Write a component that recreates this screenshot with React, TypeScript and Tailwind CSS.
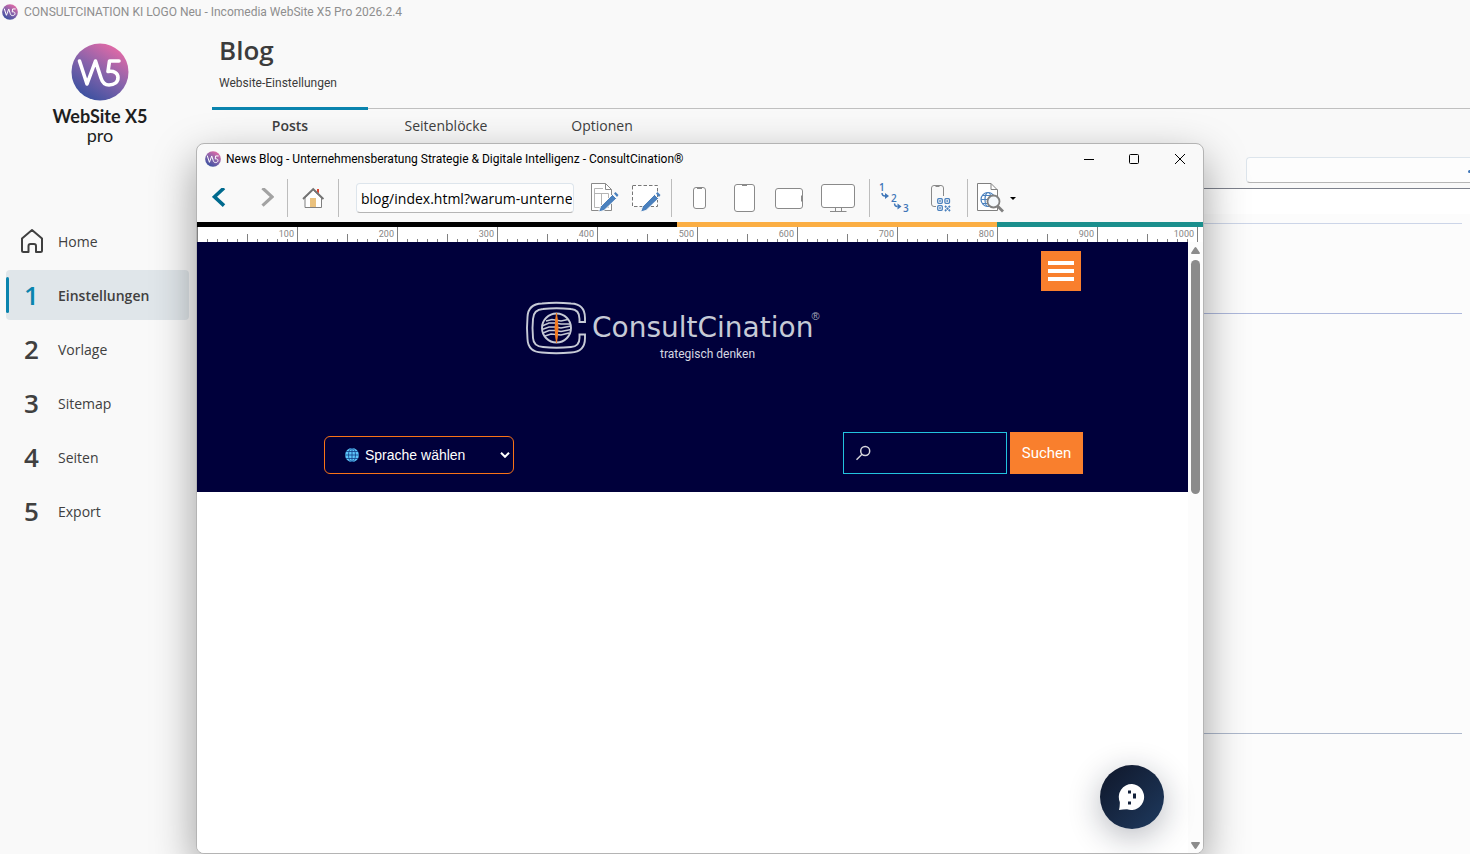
import React, { useId } from 'react';

const UI = "font-['Open_Sans','Noto_Sans',sans-serif]";

function BrandMark({ className }: { className: string }) {
  const id = useId();
  return (
    <svg viewBox="0 0 58 58" className={className} aria-hidden="true">
      <defs>
        <linearGradient id={id} x1="0.8" y1="0.05" x2="0.25" y2="0.95">
          <stop offset="0" stopColor="#e56aa6" />
          <stop offset="0.5" stopColor="#8763ab" />
          <stop offset="1" stopColor="#3c51a0" />
        </linearGradient>
      </defs>
      <circle cx="29" cy="29" r="28.5" fill={`url(#${id})`} />
      <path
        d="M8.500 18 L16 41 L24.500 18 L30 35 C31.500 40 34 42 38 42 C43.500 42 47 39 47 34.500 C47 30 43 27.500 37 28.500 L38.500 18 H48"
        fill="none"
        stroke="#fff"
        strokeWidth="3.600"
        strokeLinecap="round"
        strokeLinejoin="round"
      />
    </svg>
  );
}

const NAV = [
  { mark: '1', label: 'Einstellungen', active: true },
  { mark: '2', label: 'Vorlage' },
  { mark: '3', label: 'Sitemap' },
  { mark: '4', label: 'Seiten' },
  { mark: '5', label: 'Export' },
];

function Sidebar() {
  return (
    <aside className="w-[212px] shrink-0">
      <div className="flex w-[200px] flex-col items-center pt-[19px] font-['Lato',sans-serif] text-[#1f1f1f]">
        <BrandMark className="h-[58px] w-[58px]" />
        <div className="mt-[6px] text-[18px] leading-[18px] font-bold">WebSite X5</div>
        <div className="text-[18px] leading-5">pro</div>
      </div>
      <nav className="mt-[71px] flex flex-col gap-1 pr-[23px] pl-[6px] text-[14px] text-[#404040]">
        <a href="#home" className="flex h-[50px] items-center">
          <span className="flex w-[52px] justify-center">
            <svg viewBox="0 0 24 26" className="h-[26px] w-6" fill="none" stroke="#404040" strokeWidth="2" strokeLinejoin="round" aria-hidden="true">
              <path d="M2 10.500 L12 2 L22 10.500 V22.500 Q22 24 20.500 24 H16 V18 Q16 16 14 16 H10.500 Q8.500 16 8.500 18 V24 H3.500 Q2 24 2 22.500 Z" />
            </svg>
          </span>
          Home
        </a>
        {NAV.map((n) => (
          <a
            key={n.mark}
            href={`#${n.label.toLowerCase()}`}
            className={n.active ? 'flex h-[50px] items-center rounded bg-[#e0e6ea] font-semibold' : 'flex h-[50px] items-center'}
          >
            <span className={n.active ? 'h-9 w-[3px] rounded bg-[#0a84ae]' : 'w-[3px]'} />
            <span className={n.active ? 'w-[49px] pr-1 text-center text-[26px] font-semibold text-[#0a84ae]' : 'w-[49px] pr-1 text-center text-[26px] font-semibold'}>
              {n.mark}
            </span>
            {n.label}
          </a>
        ))}
      </nav>
    </aside>
  );
}

function Background() {
  return (
    <div className="flex min-h-screen flex-col">
      <header className="flex h-6 items-center gap-[6px] pl-[2px] font-['Roboto',sans-serif] text-[12px] text-[#8e8e8e]">
        <BrandMark className="h-4 w-4" />
        <span className="whitespace-nowrap">CONSULTCINATION KI LOGO Neu - Incomedia WebSite X5 Pro 2026.2.4</span>
      </header>
      <div className="flex grow">
        <Sidebar />
        <main className="flex min-w-0 grow flex-col">
          <div className="h-[84px] pl-[7px] text-[#3c3c3c]">
            <h1 className="pt-[9px] text-[26px] leading-[34px] font-semibold">Blog</h1>
            <p className="pt-2 font-['Roboto',sans-serif] text-[12px] leading-4">Website-Einstellungen</p>
          </div>
          <div className="flex h-9 border-t border-[#c0c0c0] text-[14px] text-[#404040]" role="tablist">
            <button role="tab" aria-selected="true" className="-mt-[2px] w-[156px] border-t-[3px] border-[#0a84ae] pb-[3px] font-semibold">Posts</button>
            <button role="tab" aria-selected="false" className="w-[156px] pb-[2px]">Seitenblöcke</button>
            <button role="tab" aria-selected="false" className="w-[156px] pb-[2px]">Optionen</button>
          </div>
          <div className="flex h-[45px] items-center justify-end border-b border-[#7d818c] pt-[7px]">
            <input aria-label="Suche" className="h-[26px] w-[224px] rounded-l border border-r-0 border-[#dde5ec] border-b-[#b5b5b5] bg-[#fdfdfd] px-2" />
          </div>
          <div className="h-[25px] bg-white" />
          <div className="grow bg-[#fcfcfc] pt-[9px] pr-2">
            <div className="h-[90px] border-t border-[#ccd5e8]" />
            <div className="h-[420px] border-t border-[#adb8dc]" />
            <div className="border-t border-[#adb8cc]" />
          </div>
        </main>
        <span className="absolute top-[170px] right-0 h-[3px] w-[2px] rounded-l-full bg-[#3f76b8]" />
      </div>
    </div>
  );
}

function Separator() {
  return <span className="h-[38px] w-px shrink-0 bg-[#bdbdbd]" />;
}

function ToolButton({ label, className, children }: { label: string; className: string; children: React.ReactNode }) {
  return (
    <button aria-label={label} className={`flex h-10 shrink-0 items-center justify-center ${className}`}>
      {children}
    </button>
  );
}

function Pencil() {
  return (
    <g>
      <path d="M9.500 30 L11.500 24.500 L23.500 12.500 L27.500 16.500 L15 28.500 Z" fill="#4a80bd" stroke="#f9f9f9" strokeWidth="1" />
      <path d="M25 11.500 L26.500 10 L29.500 13 L28 15 Z" fill="#4a80bd" stroke="none" />
    </g>
  );
}

function Toolbar() {
  return (
    <div className="flex h-12 items-center">
      <ToolButton label="Zurück" className="w-11">
        <svg viewBox="0 0 14 20" className="h-5 w-[14px]" fill="none" stroke="#006a8e" strokeWidth="3.600"><path d="M12 0 L2.500 8.800 L12 17.600" /></svg>
      </ToolButton>
      <ToolButton label="Vorwärts" className="ml-[6px] w-10">
        <svg viewBox="0 0 14 20" className="h-5 w-[14px]" fill="none" stroke="#a3a3a3" strokeWidth="3.200"><path d="M2.500 0 L12 8.800 L2.500 17.600" /></svg>
      </ToolButton>
      <Separator />
      <ToolButton label="Startseite" className="w-[50px]">
        <svg viewBox="0 0 22 22" className="h-[22px] w-[22px]" fill="none">
          <path d="M15 2 h2 v4.500 l-2 -2 z" fill="#e0452f" />
          <path d="M3 11 V20.500 H19.500 V11 L11.200 3 Z" fill="#fff" stroke="#808080" />
          <rect x="8" y="11" width="6" height="9" fill="#eac17d" />
          <path d="M1 12 L11.200 2 L21.400 12" stroke="#747474" strokeWidth="1.800" />
        </svg>
      </ToolButton>
      <Separator />
      <input
        aria-label="Adresse"
        defaultValue="blog/index.html?warum-unternehmen"
        className="ml-[17px] h-[30px] w-[218px] shrink-0 rounded border border-[#dde5ec] border-b-[#b5b5b5] bg-[#fdfdfd] pr-px pl-1 text-[14px] text-black outline-none"
      />
      <ToolButton label="Seite bearbeiten" className="ml-[9px] w-[42px]">
        <svg viewBox="0 0 30 32" className="h-8 w-[30px]" fill="none" stroke="#8a8a8a">
          <path d="M2.500 1.500 H16.500 L22.500 7.500 V28.500 H2.500 Z" fill="#fff" />
          <path d="M16.500 1.500 V7.500 H22.500" />
          <path d="M5.500 6.500 H14 M5.500 6.500 V25.500 H19.500 V11.500 M5.500 11.500 H19.500 M12.500 11.500 V25.500" stroke="#b4b4b4" />
          <Pencil />
        </svg>
      </ToolButton>
      <ToolButton label="Bereich bearbeiten" className="mr-1 w-[42px]">
        <svg viewBox="0 0 30 32" className="h-8 w-[30px]" fill="none">
          <rect x="1.500" y="3.500" width="25" height="21" fill="#fff" stroke="#777" strokeDasharray="3.500 2" />
          <Pencil />
        </svg>
      </ToolButton>
      <Separator />
      <ToolButton label="Smartphone" className="ml-[6px] w-11">
        <svg viewBox="0 0 14 22" className="h-[22px] w-[14px]" fill="#fff" stroke="#8a8a8a">
          <rect x="0.500" y="0.500" width="12" height="21" rx="2.500" /><path d="M4 1.500 H9" />
        </svg>
      </ToolButton>
      <ToolButton label="Tablet hochkant" className="ml-px w-11">
        <svg viewBox="0 0 22 28" className="h-7 w-[22px]" fill="#fff" stroke="#8a8a8a">
          <rect x="0.500" y="0.500" width="20" height="27" rx="2.500" /><path d="M8 1.500 H13" />
        </svg>
      </ToolButton>
      <ToolButton label="Tablet quer" className="w-11">
        <svg viewBox="0 0 28 22" className="h-[22px] w-7" fill="#fff" stroke="#8a8a8a">
          <rect x="0.500" y="1.500" width="27" height="20" rx="2.500" /><path d="M26.500 8.500 V14.500" />
        </svg>
      </ToolButton>
      <ToolButton label="Desktop" className="mr-1 w-[54px]">
        <svg viewBox="0 0 34 28" className="h-7 w-[34px]" fill="#fff" stroke="#8a8a8a">
          <rect x="0.500" y="0.500" width="33" height="23" rx="2.500" /><path d="M14.500 23.500 V27.500 M20.500 23.500 V27.500 M9 27.500 H25.500" />
        </svg>
      </ToolButton>
      <Separator />
      <ToolButton label="Reihenfolge" className="w-[50px]">
        <svg viewBox="0 0 34 38" className="h-[38px] w-[34px] font-['Open_Sans',sans-serif] text-[10px] font-semibold" fill="#3f76b8">
          <text x="1" y="12">1</text>
          <text x="13" y="23">2</text>
          <text x="25" y="33">3</text>
          <path d="M4 14 Q4 17 7 17" fill="none" stroke="#3f76b8" strokeWidth="1.400" /><path d="M7 14 L11 17 L7 20 Z" />
          <path d="M16.500 24.500 Q16.500 27.500 19.500 27.500" fill="none" stroke="#3f76b8" strokeWidth="1.400" /><path d="M19.500 24.500 L23.500 27.500 L19.500 30.500 Z" />
        </svg>
      </ToolButton>
      <ToolButton label="QR-Code" className="mr-[5px] w-[42px]">
        <svg viewBox="0 0 20 28" className="h-7 w-5" fill="none" stroke="#8a8a8a">
          <path d="M5 22.500 H3 Q0.500 22.500 0.500 20 V4 Q0.500 1.500 3 1.500 H10 Q12.500 1.500 12.500 4 V12" />
          <path d="M4.500 2.500 H8.500" />
          <g stroke="#4a80bd" strokeWidth="1.300">
            <rect x="6.700" y="14.700" width="4.600" height="4.600" rx="1" /><rect x="13.900" y="14.700" width="4.600" height="4.600" rx="1" />
            <rect x="6.700" y="21.700" width="4.600" height="4.600" rx="1" />
            <path d="M14 22 L19 27 M19 22 L14 27" strokeWidth="1.800" strokeDasharray="2 0.600" />
          </g>
          <g fill="#4a80bd" stroke="none"><rect x="8.200" y="16.200" width="1.600" height="1.600" /><rect x="15.400" y="16.200" width="1.600" height="1.600" /><rect x="8.200" y="23.200" width="1.600" height="1.600" /></g>
        </svg>
      </ToolButton>
      <Separator />
      <ToolButton label="Vorschau" className="gap-[5px] pl-[9px]">
        <svg viewBox="0 0 28 32" className="h-8 w-7" fill="none" stroke="#808080">
          <path d="M0.500 1.500 H14 L20.500 8 V28.500 H0.500 Z" fill="#fff" />
          <path d="M14 1.500 V7.500 H20.500" />
          <g stroke="#4a80bd" strokeWidth="1.200"><circle cx="11" cy="17.500" r="7" /><ellipse cx="11" cy="17.500" rx="3" ry="7" /><path d="M4 17.500 H12 M5 13.500 H15 M5 21.500 H12" /></g>
          <circle cx="16.500" cy="19.500" r="6" fill="#f4f8fc" strokeWidth="1.800" />
          <path d="M20.500 24 L26 29.500" strokeWidth="2.800" />
        </svg>
        <svg viewBox="0 0 6 3" className="h-[3px] w-[6px]"><path d="M0 0 H6 L3 3 Z" /></svg>
      </ToolButton>
    </div>
  );
}

const RULER = [100, 200, 300, 400, 500, 600, 700, 800, 900, 1000];

function Ruler() {
  return (
    <div className="flex h-[15px] shrink-0 overflow-hidden bg-white">
      {RULER.map((n) => (
        <div key={n} className="grid h-[15px] w-[100px] shrink-0">
          <div className="col-start-1 row-start-1 grid grid-cols-10 items-end">
            <span className="h-[15px] border-l border-[#808080]" />
            {[1, 2, 3, 4, 5, 6, 7, 8, 9].map((t) => (
              <span key={t} className={t === 5 ? 'h-2 border-l border-[#808080]' : 'h-[3px] border-l border-[#808080]'} />
            ))}
          </div>
          <span className="col-start-1 row-start-1 pr-[3px] text-right font-['Roboto',sans-serif] text-[9px] leading-[15px] text-[#858585]">{n}</span>
        </div>
      ))}
      <span className="h-[15px] shrink-0 border-l border-[#808080]" />
    </div>
  );
}

function CompanyLogo() {
  return (
    <div className="flex items-center gap-[5px]">
      <svg viewBox="0 0 62 54" className="h-[54px] w-[62px]" fill="none" stroke="#c6cad6" strokeWidth="1.900">
        <path d="M54.500 33.500 H60 V37 Q60 51 46 51.500 Q31 53 17 51.500 Q3 51 2.500 38 Q1.500 27 2.500 16 Q3 3 17 2.500 Q31 1 46 2.500 Q60 3 60 17 V21 H54.500 V18 Q54.500 8.500 46 8 Q31 6.500 18 8 Q8.500 8.500 8 18 Q7 27 8 37 Q8.500 45.500 18 46 Q31 47.500 46 46 Q54.500 45.500 54.500 37 Z" />
        <circle cx="31.500" cy="27" r="14.500" />
        <path d="M17 25 L24 22 H30 L36 23 H46 M17 28.500 L24 26 H30 L36 27 L46 25 M18 32 L24 29.500 H30 L36 30.500 L46 28.500 M20 35 L26 33 L36 34 L44 32 M21 20 L27 18.500 L36 20 L43 18.500" strokeWidth="1.400" />
        <path d="M31.500 12 Q34.500 27 31.500 42 Q28.500 27 31.500 12 Z" fill="#f47a20" stroke="#f47a20" strokeWidth="1" />
      </svg>
      <span className="flex items-start">
        <span className="font-['DejaVu_Sans',sans-serif] text-[28px] leading-9 font-normal text-[#c6cad6]">ConsultCination</span>
        <span className="-ml-[2px] font-['Liberation_Sans',sans-serif] text-[11px] leading-3 text-[#a9adbd]">®</span>
      </span>
    </div>
  );
}

function Site() {
  return (
    <div className="flex min-w-0 grow flex-col bg-white">
      <section className="flex h-[250px] flex-col bg-[#00003b] pt-[9px] pr-[105px] pl-[127px]">
        <div className="flex justify-end pr-[2px]">
          <button aria-label="Menü" className="flex h-10 w-10 flex-col items-center justify-center gap-1 bg-[#f97f2d]">
            <span className="h-1 w-[26px] bg-white" />
            <span className="h-1 w-[26px] bg-white" />
            <span className="h-1 w-[26px] bg-white" />
          </button>
        </div>
        <div className="mt-[10px] ml-[201px] flex flex-col">
          <CompanyLogo />
          <p className="-mt-[9px] ml-[135px] font-['Roboto',sans-serif] text-[12px] leading-4 text-[#d5d8e2]">trategisch denken</p>
        </div>
        <div className="mt-auto mb-[18px] flex items-end justify-between">
          <label className="grid items-center">
            <svg viewBox="0 0 14 14" className="z-10 col-start-1 row-start-1 ml-[21px] h-[14px] w-[14px]" fill="#5cc4fa" stroke="#123f86" strokeWidth="0.800" aria-hidden="true">
              <circle cx="7" cy="7" r="6.900" stroke="none" />
              <path d="M7 0 V14 M0 7 H14 M1 3.500 H13 M1 10.500 H13" />
              <ellipse cx="7" cy="7" rx="3.500" ry="6.800" fill="none" />
            </svg>
            <select aria-label="Sprache wählen" className="col-start-1 row-start-1 h-[38px] w-[190px] appearance-none rounded-md border border-[#f97316] bg-[#00003b] pl-10 font-['Liberation_Sans',sans-serif] text-[14px] text-white">
              <option>Sprache wählen</option>
            </select>
            <svg viewBox="0 0 10 6" className="z-10 col-start-1 row-start-1 mr-1 h-[6px] w-[10px] justify-self-end" fill="none" stroke="#fff" strokeWidth="2" aria-hidden="true"><path d="M1 0.800 L5 4.800 L9 0.800" /></svg>
          </label>
          <form className="flex gap-[3px]" onSubmit={(e) => e.preventDefault()}>
            <label className="grid items-center">
              <svg viewBox="0 0 16 16" className="z-10 col-start-1 row-start-1 ml-3 h-4 w-4" fill="none" stroke="#d6d6dc" strokeWidth="1.500" aria-hidden="true">
                <circle cx="10.200" cy="6" r="4.500" /><path d="M7 9.200 L1.500 14.700" />
              </svg>
              <input aria-label="Suchbegriff" className="col-start-1 row-start-1 h-[42px] w-[164px] border border-[#22c3dd] bg-transparent pr-2 pl-9 text-white outline-none" />
            </label>
            <button className="h-[42px] w-[73px] bg-[#f97f2d] font-['Roboto',sans-serif] text-[15px] text-white">Suchen</button>
          </form>
        </div>
      </section>
    </div>
  );
}

function PreviewWindow() {
  return (
    <section className="absolute top-[143px] right-[266px] bottom-0 left-[196px] flex flex-col overflow-hidden rounded-lg border border-[#b4b4b4] bg-[#f9f9f9] shadow-[0_16px_44px_rgba(0,0,0,0.38)]">
      <header className="flex h-[30px] shrink-0 items-center pl-2 text-[12px] text-black">
        <BrandMark className="h-4 w-4" />
        <h2 className="ml-[5px] grow font-['Roboto',sans-serif] whitespace-nowrap">News Blog - Unternehmensberatung Strategie &amp; Digitale Intelligenz - ConsultCination®</h2>
        <button aria-label="Minimieren" className="flex w-11 justify-center">
          <svg viewBox="0 0 10 10" className="h-[10px] w-[10px]" stroke="#000"><path d="M0 5.500 H10" /></svg>
        </button>
        <button aria-label="Maximieren" className="flex w-[46px] justify-center">
          <svg viewBox="0 0 10 10" className="h-[10px] w-[10px]" stroke="#000" fill="none"><rect x="0.500" y="0.500" width="9" height="9" rx="1" /></svg>
        </button>
        <button aria-label="Schließen" className="flex w-[46px] justify-center">
          <svg viewBox="0 0 10 10" className="h-[10px] w-[10px]" stroke="#000"><path d="M0 0 L10 10 M10 0 L0 10" /></svg>
        </button>
      </header>
      <Toolbar />
      <div className="flex h-[5px] shrink-0">
        <span className="w-[480px] bg-black" />
        <span className="w-[320px] bg-[#fbae44]" />
        <span className="grow bg-[#1b8f8d]" />
      </div>
      <Ruler />
      <div className="relative flex min-h-0 grow">
        <Site />
        <div className="flex w-[15px] shrink-0 flex-col items-center bg-[#fcfcfc] pt-[5px] pb-1">
          <svg viewBox="0 0 9 7" className="h-[7px] w-[9px]" fill="#8b8b8b"><path d="M4.500 0 Q5 0 5.500 0.800 L9 6 Q9 7 8 7 H1 Q0 7 0 6 L3.500 0.800 Q4 0 4.500 0 Z" /></svg>
          <span className="mt-[6px] h-[234px] w-[9px] rounded-full bg-[#8b8b8b]" />
          <svg viewBox="0 0 9 7" className="mt-auto h-[7px] w-[9px]" fill="#8b8b8b"><path d="M4.500 7 Q5 7 5.500 6.200 L9 1 Q9 0 8 0 H1 Q0 0 0 1 L3.500 6.200 Q4 7 4.500 7 Z" /></svg>
        </div>
        <button aria-label="Chat öffnen" className="absolute right-[39px] bottom-6 flex h-16 w-16 items-center justify-center rounded-full bg-linear-to-br from-[#0f172a] to-[#1e3a5f] shadow-[0_8px_32px_rgba(15,23,42,0.3)]">
          <svg viewBox="0 0 28 28" className="h-7 w-7" fill="#fff">
            <path d="M14 1 A13 13 0 1 1 9 26.300 Q5 26.500 1 27 Q2 23 1.800 19 A13 13 0 0 1 14 1 Z" />
            <path d="M10 7.500 h3 v3 h-3 z M15 10.500 h3 v5 h-3 z M10 18.500 h3 v3 h-3 z" fill="#12203a" />
          </svg>
        </button>
      </div>
    </section>
  );
}

export default function App() {
  return (
    <div className={`relative min-h-screen overflow-hidden bg-[#f9f9f9] ${UI}`}>
      <Background />
      <PreviewWindow />
    </div>
  );
}
